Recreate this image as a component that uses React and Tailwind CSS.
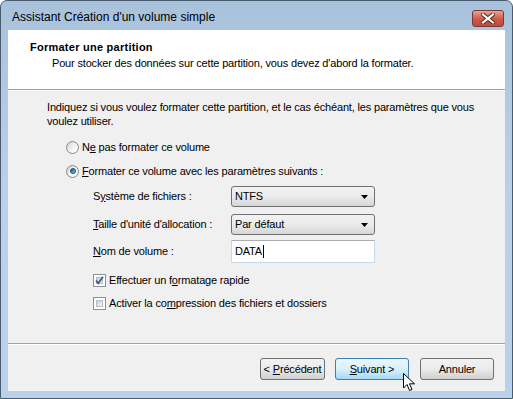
import React from 'react'

function Radio({checked}) {
  return (
    <span className="relative inline-block w-[13px] h-[13px] rounded-full border border-[#8a8a8a] bg-gradient-to-br from-[#d0d0d0] via-[#f2f2f2] to-[#ffffff] shrink-0">
      {checked && (
        <span className="absolute left-[2.5px] top-[2.5px] w-[6px] h-[6px] rounded-full bg-gradient-to-br from-[#1c5a8c] via-[#3d8ed0] to-[#8fd0f5] border border-[#194e79]"></span>
      )}
    </span>
  )
}

function Check({checked}) {
  return (
    <span className="relative inline-block w-[13px] h-[13px] border border-[#8f8f8f] bg-white shrink-0">
      <span className="absolute inset-[2px] bg-gradient-to-br from-[#cbcfd5] to-[#f6f6f6] border border-[#b8bcc2]"></span>
      {checked && (
        <svg className="absolute left-0 top-0" width="11" height="11" viewBox="0 0 11 11">
          <path d="M2 5.5 L4.3 8.2 L9 1.8" stroke="#3a5f91" strokeWidth="1.8" fill="none" />
        </svg>
      )}
    </span>
  )
}

function Combo({value}) {
  return (
    <div className="w-[144px] h-[21px] rounded-[3px] border border-[#707070] bg-gradient-to-b from-[#f2f2f2] via-[#ebebeb] to-[#d6d6d6] flex items-center pl-[3px] pr-[6px]">
      <span className="flex-1">{value}</span>
      <svg width="7" height="4" viewBox="0 0 7 4"><path d="M0 0 H7 L3.5 4 Z" fill="#000" /></svg>
    </div>
  )
}

function Btn({children, hot, w}) {
  return (
    <div className={"h-[22px] rounded-[3px] border flex items-center justify-center " + w + " " + (hot ? "border-[#3c7fb1] bg-gradient-to-b from-[#eaf6fd] via-[#d9f0fc] to-[#a7d9f5]" : "border-[#707070] bg-gradient-to-b from-[#f2f2f2] via-[#ebebeb] to-[#cfcfcf]")}>
      <span>{children}</span>
    </div>
  )
}

export default function App() {
  return (
    <div className="w-[513px] h-[399px] bg-white font-['Liberation_Sans',Arial,sans-serif] text-[11px] text-black">
      <div className="w-full h-full border border-[#4b5b6e] rounded-t-[7px] bg-gradient-to-b from-[#a9c2dc] via-[#bcd1e9] to-[#b9d1ea] flex flex-col px-[7px] pb-[7px]">
        {/* title bar */}
        <div className="h-[29px] flex items-center relative">
          <span className="pl-[4px] pt-[3px] text-[12px] text-black">Assistant Création d'un volume simple</span>
          <div className="absolute right-[1px] top-[9px] w-[32px] h-[17px] rounded-[3px] border border-[#7a3a3a] bg-gradient-to-b from-[#e8a493] via-[#cf5c4a] to-[#c0483a] flex items-center justify-center">
            <svg width="14" height="11" viewBox="0 0 14 11">
              <path d="M2 1.5 L12 9.5 M12 1.5 L2 9.5" stroke="#4a2420" strokeWidth="4" strokeLinecap="square" />
              <path d="M2 1.5 L12 9.5 M12 1.5 L2 9.5" stroke="#fff" strokeWidth="2.2" strokeLinecap="square" />
            </svg>
          </div>
        </div>

        {/* content */}
        <div className="flex-1 flex flex-col bg-[#f0f0f0] tracking-[-0.17px]">
          <div className="h-[59px] bg-white pl-[22px] pt-[10px]">
            <div className="font-bold leading-[14px] tracking-[0.25px]">Formater une partition</div>
            <div className="pl-[22px] pt-[2px] leading-[14px]">Pour stocker des données sur cette partition, vous devez d'abord la formater.</div>
          </div>
          <div className="h-px bg-[#a0a0a0]"></div>
          <div className="h-px bg-white"></div>

          <div className="flex-1 pl-[39px] pt-[9px] flex flex-col">
            <div className="leading-[14px] w-[440px]">Indiquez si vous voulez formater cette partition, et le cas échéant, les paramètres que vous voulez utiliser.</div>

            <div className="pl-[19px] mt-[12px] h-[14px] flex items-center gap-[3px]">
              <Radio />
              <span>N<u>e</u> pas formater ce volume</span>
            </div>
            <div className="pl-[19px] mt-[10px] h-[14px] flex items-center gap-[3px]">
              <Radio checked />
              <span><u>F</u>ormater ce volume avec les paramètres suivants :</span>
            </div>

            <div className="pl-[46px] mt-[8px] flex flex-col">
              <div className="flex items-center">
                <span className="w-[138px]">S<u>y</u>stème de fichiers :</span>
                <Combo value="NTFS" />
              </div>
              <div className="flex items-center mt-[7px]">
                <span className="w-[138px]"><u>T</u>aille d'unité d'allocation :</span>
                <Combo value="Par défaut" />
              </div>
              <div className="flex items-center mt-[5px]">
                <span className="w-[138px]"><u>N</u>om de volume :</span>
                <div className="w-[144px] h-[23px] border border-[#c5dbec] border-t-[#abadb3] bg-white flex items-center pl-[3px]">
                  DATA<span className="inline-block w-px h-[13px] bg-black ml-px"></span>
                </div>
              </div>
              <div className="flex items-center h-[13px] gap-[3px] mt-[11px]">
                <Check checked />
                <span>Effectuer un f<u>o</u>rmatage rapide</span>
              </div>
              <div className="flex items-center h-[13px] gap-[3px] mt-[10px]">
                <Check />
                <span>Activer la co<u>m</u>pression des fichiers et dossiers</span>
              </div>
            </div>
          </div>

          <div className="h-px bg-[#a0a0a0]"></div>
          <div className="h-px bg-white"></div>
          <div className="h-[46px] flex items-start justify-end pt-[13px] pr-[11px] relative">
            <div className="flex">
              <Btn w="w-[65px]">&lt; <u>P</u>récédent</Btn>
              <div className="w-[10px]"></div>
              <Btn hot w="w-[74px]"><u>S</u>uivant &gt;</Btn>
              <div className="w-[11px]"></div>
              <Btn w="w-[74px]">Annuler</Btn>
            </div>
            <svg className="absolute left-[395px] top-[28px]" width="14" height="20" viewBox="0 0 14 20">
              <path d="M0.5 0.5 L0.5 15 L4 11.5 L6.5 17.5 L9 16.5 L6.5 10.8 L11.5 10.8 Z" fill="#fff" stroke="#000" strokeWidth="1" />
            </svg>
          </div>
        </div>
      </div>
    </div>
  )
}
